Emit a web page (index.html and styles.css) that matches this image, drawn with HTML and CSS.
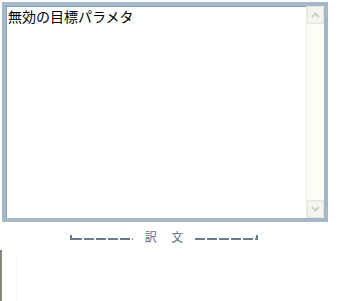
FILE: index.html
```html
<!DOCTYPE html>
<html lang="ja">
<head>
  <meta charset="UTF-8" />
  <title>訳文</title>
  <link rel="stylesheet" href="styles.css">
</head>
<body>
  <div class="page">
    <!-- 原文 -->
    <div class="box">
      <div class="text">無効の目標パラメタ</div>
      <div class="scroll">
        <div class="arrow up">
          <svg width="9" height="6" viewBox="0 0 9 6"><path d="M1 5 L4.5 1.5 L8 5" fill="none" stroke="#c4c8cc" stroke-width="1.6"/></svg>
        </div>
        <div class="track"></div>
        <div class="arrow down">
          <svg width="9" height="6" viewBox="0 0 9 6"><path d="M1 1 L4.5 4.5 L8 1" fill="none" stroke="#c4c8cc" stroke-width="1.6"/></svg>
        </div>
      </div>
    </div>

    <!-- 見出し -->
    <div class="caption">
      <span class="rule left"></span>
      <span class="label">訳 文</span>
      <span class="rule right"></span>
    </div>

    <!-- 訳文 -->
    <div class="box2"></div>
  </div>
</body>
</html>
```

FILE: styles.css
```css
body {
  margin: 0;
  background: #fff;
  font-family: "Noto Sans CJK JP", "Liberation Sans", sans-serif;
}

.page {
  width: 347px;
  height: 301px;
  overflow: hidden;
}

.box {
  margin: 2px 0 0 2px;
  width: 318px;
  height: 212px;
  border: 4px solid #a4b8ca;
  box-shadow: inset 1px 1px 0 #8a9cb0;
  display: flex;
  background: #fff;
}

.text {
  flex: 1;
  padding: 2px 0 0 2px;
  font-size: 14px;
  line-height: 16px;
  color: #000;
}

.scroll {
  width: 17px;
  display: flex;
  flex-direction: column;
  background: #fdfdf6;
  border-left: 1px solid #eeeee4;
}

.arrow {
  height: 16px;
  display: flex;
  align-items: center;
  justify-content: center;
  background: #f4f4ee;
  border: 1px solid #e4e4dc;
}

.track {
  flex: 1;
}

.caption {
  margin: 8px 0 0 70px;
  width: 188px;
  display: flex;
  align-items: center;
  gap: 8px;
  color: #5e6e80;
  font-size: 12px;
  line-height: 14px;
}

.label {
  letter-spacing: 6px;
  margin-right: -6px;
  padding: 0 4px;
}

.rule {
  flex: 1;
  height: 5px;
  background: repeating-linear-gradient(90deg, #6c7c8c 0 10px, transparent 10px 12px) bottom / 100% 2px no-repeat;
}

.rule.left {
  border-left: 2px solid #6c7c8c;
}

.rule.right {
  border-right: 2px solid #6c7c8c;
}

.box2 {
  margin-top: 6px;
  height: 60px;
  width: 14px;
  border-left: 2px solid #85857a;
  border-right: 1px solid #fbfbee;
}
```
